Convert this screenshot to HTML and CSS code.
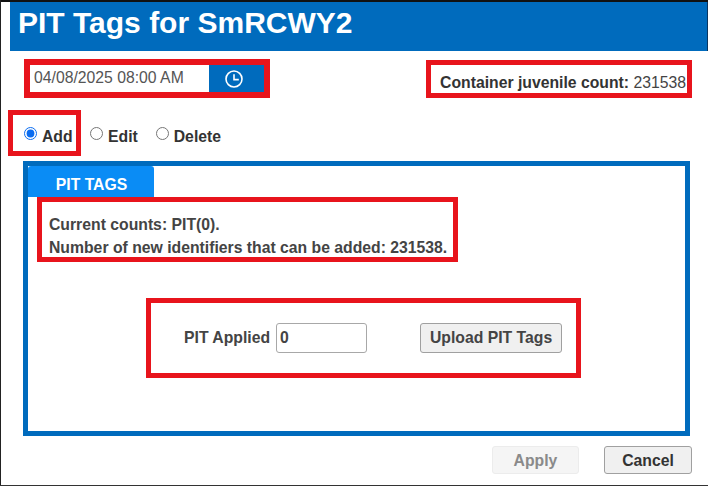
FILE: index.html
```html
<!DOCTYPE html>
<html lang="en">
<head>
    <meta charset="UTF-8">
    <meta name="viewport" content="width=device-width, initial-scale=1.0">
    <title>PIT Tags for SmRCWY2</title>
    <link rel="stylesheet" href="styles.css">
</head>
<body>

<div class="page">
    <h1 class="title-bar">PIT Tags for SmRCWY2</h1>

    <div class="top-row">
        <div class="mark date-mark">
            <input class="date-input" type="text" value="04/08/2025 08:00 AM">
            <button class="clock-btn" type="button" aria-label="Pick time">
                <svg width="20" height="20" viewBox="0 0 20 20" fill="none" stroke="#fff" stroke-width="1.6">
                    <circle cx="10" cy="10" r="8"/>
                    <path d="M10 5.2V10.6H14.8"/>
                </svg>
            </button>
        </div>
        <div class="mark count-mark">
            <b>Container juvenile count:</b>&nbsp;<span>231538</span>
        </div>
    </div>

    <div class="mode-row">
        <div class="mark add-mark">
            <label class="mode"><input type="radio" name="mode" checked> Add</label>
        </div>
        <label class="mode edit-mode"><input type="radio" name="mode"> Edit</label>
        <label class="mode delete-mode"><input type="radio" name="mode"> Delete</label>
    </div>

    <div class="panel">
        <div class="tab">PIT TAGS</div>
        <div class="mark counts-mark">
            <p>Current counts: PIT(0).</p>
            <p>Number of new identifiers that can be added: 231538.</p>
        </div>
        <div class="mark applied-mark">
            <label for="pit-applied">PIT Applied</label>
            <input id="pit-applied" class="pit-input" type="text" value="0">
            <button class="btn upload-btn" type="button">Upload PIT Tags</button>
        </div>
    </div>

    <div class="footer">
        <button class="btn apply-btn" type="button" disabled>Apply</button>
        <button class="btn cancel-btn" type="button">Cancel</button>
    </div>
</div>

</body>
</html>
```

FILE: styles.css
```css
html, body {
    margin: 0;
    background-color: #fff;
}
.page {
    box-sizing: border-box;
    width: 708px;
    height: 486px;
    overflow: hidden;
    padding-top: 2px;
    border-bottom: 1px solid #333;
    box-shadow: inset 1px 0 0 #222, inset 0 2px 0 #111;
    font-family: "Liberation Sans", Arial, sans-serif;
    font-size: 15.75px;
    color: #333;
}
.mark {
    box-sizing: border-box;
    border: 5px solid #e8141c;
}
.title-bar {
    box-sizing: border-box;
    height: 49px;
    margin: 0 0 0 10px;
    padding-left: 8px;
    background-color: #006bbd;
    border-right: 1px solid #0a3560;
    color: #fff;
    font-size: 30px;
    line-height: 42px;
}
.top-row {
    display: flex;
    justify-content: space-between;
    align-items: flex-end;
    margin: 8px 16px 0 24px;
}
.date-mark {
    display: flex;
    width: 246px;
    height: 39px;
    border-width: 6px;
}
.date-input {
    box-sizing: border-box;
    width: 179px;
    height: 27px;
    border: none;
    padding: 0 4px 2px;
    font-family: inherit;
    font-size: inherit;
    color: #555;
}
.clock-btn {
    display: flex;
    justify-content: center;
    align-items: center;
    width: 55px;
    height: 27px;
    padding: 0 6px 0 0;
    border: none;
    background-color: #006bbd;
}
.count-mark {
    display: flex;
    align-items: center;
    justify-content: flex-end;
    width: 266px;
    height: 38px;
    padding: 8px 1px 0 0;
    white-space: nowrap;
}
.count-mark span {
    color: #444;
}
.mode-row {
    display: flex;
    align-items: center;
    margin: 12px 0 0 8px;
}
.add-mark {
    display: flex;
    align-items: center;
    width: 73px;
    height: 46px;
    padding-left: 11px;
}
.mode {
    display: flex;
    align-items: center;
    padding-top: 8px;
    font-weight: bold;
    white-space: nowrap;
    gap: 5px;
}
.mode input {
    width: 13px;
    height: 13px;
    margin: 0 0 7px 0;
    accent-color: #0a6cf0;
}
.edit-mode {
    margin-left: 9px;
}
.delete-mode {
    margin-left: 18px;
}
.panel {
    box-sizing: border-box;
    width: 667px;
    height: 275px;
    margin: 5px 0 0 23px;
    border: 5px solid #006bbd;
}
.tab {
    box-sizing: border-box;
    width: 126px;
    height: 31px;
    padding-left: 1px;
    background-color: #0a8cf5;
    border-radius: 3px 3px 0 0;
    color: #fff;
    font-weight: bold;
    line-height: 38px;
    text-align: center;
}
.counts-mark {
    width: 421px;
    height: 65px;
    margin: 0 0 0 9px;
    padding: 11px 0 0 7px;
    font-weight: bold;
    line-height: 23px;
    color: #444;
    white-space: nowrap;
}
.counts-mark p {
    margin: 0;
}
.applied-mark {
    display: flex;
    align-items: center;
    width: 435px;
    height: 80px;
    margin: 36px 0 0 118px;
    padding-left: 33px;
    font-weight: bold;
    color: #444;
}
.pit-input {
    box-sizing: border-box;
    width: 91px;
    height: 30px;
    margin-left: 6px;
    padding: 0 3px;
    border: 1px solid #a8a8a8;
    border-radius: 3px;
    font-family: inherit;
    font-size: inherit;
    font-weight: bold;
    color: #444;
}
.btn {
    box-sizing: border-box;
    height: 30px;
    padding: 0;
    border: 1px solid #a0a0a0;
    border-radius: 3px;
    background-color: #f0f0f0;
    font-family: inherit;
    font-size: inherit;
    font-weight: bold;
    color: #444;
}
.upload-btn {
    width: 142px;
    margin-left: 53px;
}
.footer {
    display: flex;
    gap: 25px;
    margin: 10px 0 0 492px;
}
.apply-btn {
    width: 87px;
    height: 28px;
    padding-top: 2px;
    border-color: #ececec;
    background-color: #f5f5f5;
    color: #8a8a8a;
}
.cancel-btn {
    width: 88px;
    height: 28px;
    padding-top: 2px;
    color: #333;
}
```
